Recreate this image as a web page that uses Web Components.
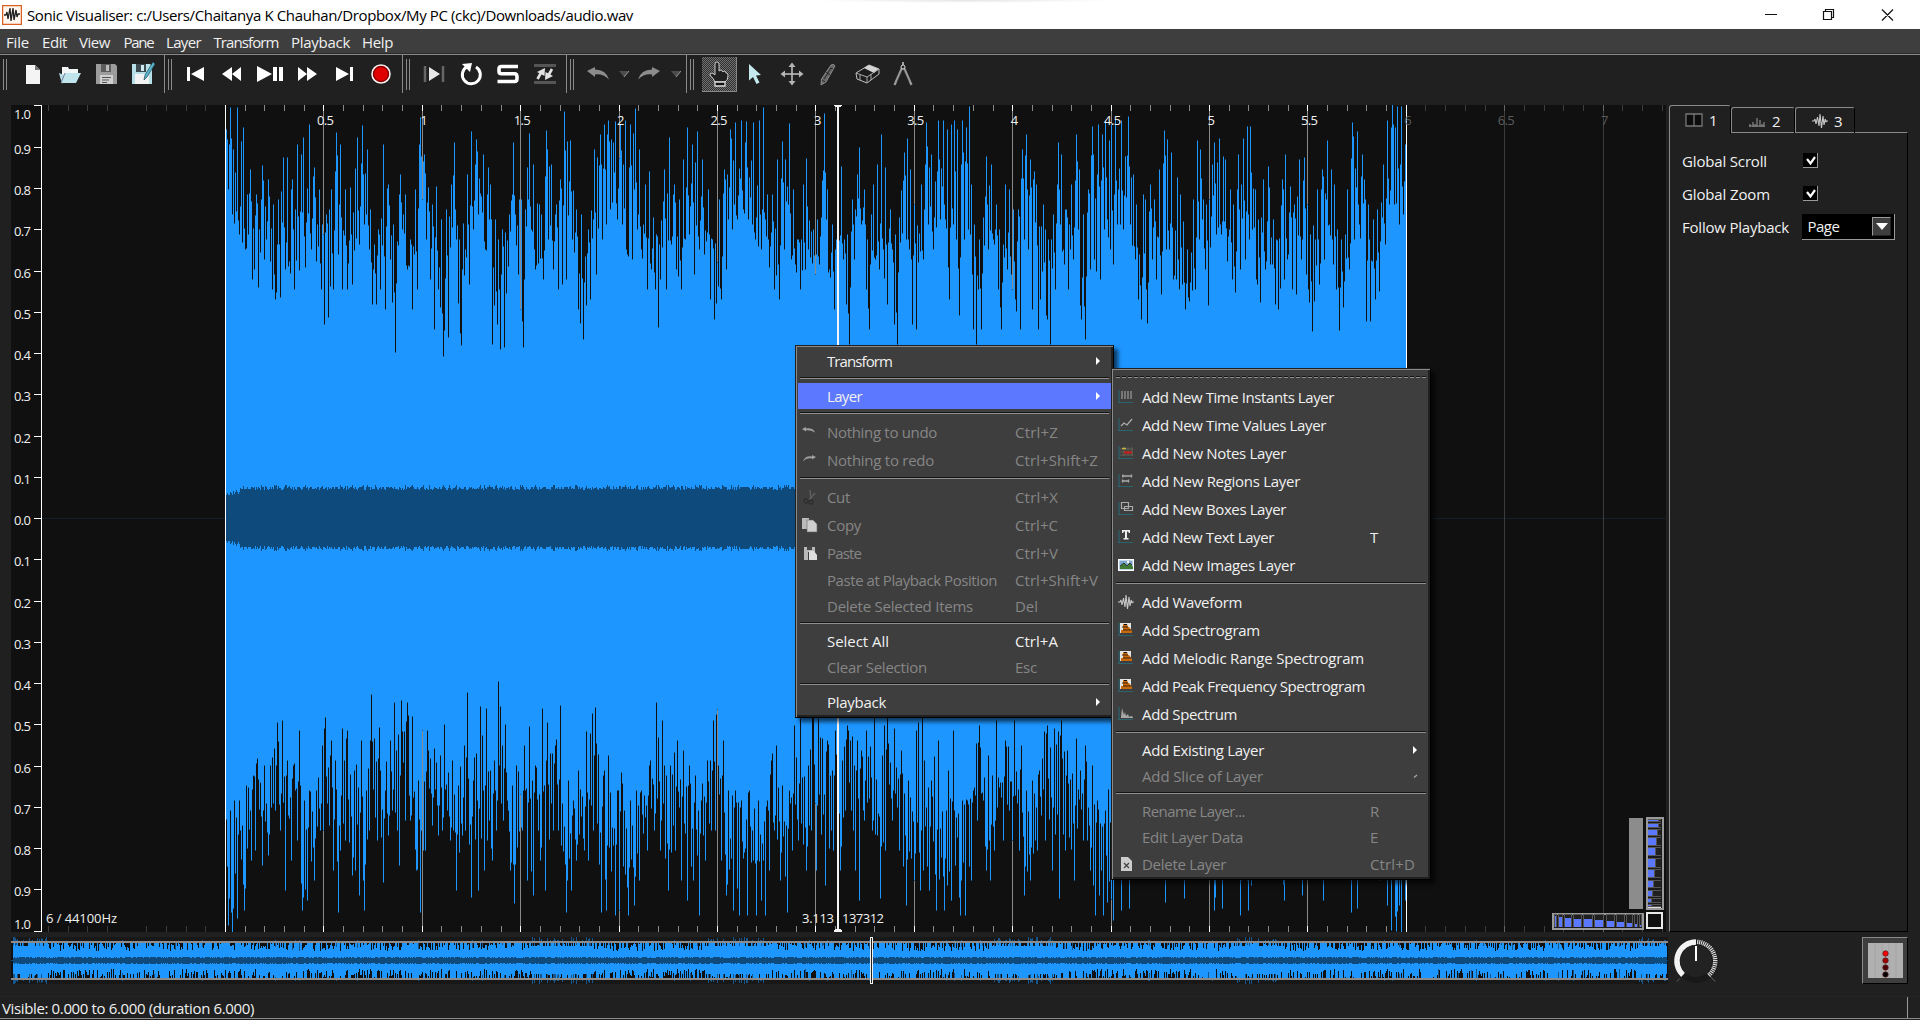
<!DOCTYPE html>
<html lang="en">
<head>
<meta charset="utf-8">
<title>Sonic Visualiser</title>
<style>
html,body{margin:0;width:1920px;height:1020px;overflow:hidden;background:#202020}
body{font:15px "Open Sans","Noto Sans",sans-serif;color:#f0f0f0}
</style>
</head>
<body>
<sv-app></sv-app>
<script>
const measure = document.createElement('canvas').getContext('2d');
const FONT = '"Open Sans","Noto Sans",sans-serif';
function define(name, html, setup) {
  const tpl = document.createElement('template');
  tpl.innerHTML = html;
  customElements.define(name, class extends HTMLElement {
    connectedCallback() {
      if (this.shadowRoot) return;
      this.attachShadow({mode: 'open'}).appendChild(tpl.content.cloneNode(true));
      if (setup) setup.call(this, this.shadowRoot);
    }
  });
}

/* A text run spaced so that it takes exactly w pixels. */
define('fit-text', `<style>:host{display:block;white-space:pre;line-height:20px}span{display:block}</style><span></span>`, function (r) {
  const t = this.getAttribute('t'), w = +this.getAttribute('w'), s = +(this.getAttribute('s') || 15);
  const el = r.querySelector('span');
  el.textContent = t;
  el.style.fontSize = s + 'px';
  if (w) {
    measure.font = s + 'px ' + FONT;
    el.style.letterSpacing = ((w - measure.measureText(t).width) / t.length).toFixed(3) + 'px';
    el.style.width = w + 'px';
  }
});

const axis = '<path d="M1 1v13M0 13.500h15" stroke="#2a6470" stroke-width="1.200"/>';
const spectro = axis + '<path d="M2 1h11v10H2z" fill="#e4e4e0"/><path d="M5 2h4l1 3h1l3 4v2H3V8h2z" fill="#c8690c"/><path d="M4 5h6M5 8h8" stroke="#3a2206" stroke-width="1"/><path d="M6 2h3v1H6z" fill="#111"/>';
const I = {
  app: ['20 20', '<path d="M.5.500h19v19H.5z" fill="#fff6ee" stroke="#d9601f" stroke-width="1.500"/><path d="M2 10h2l1-3 1 7 2-11 1 13 2-13 1 12 2-10 1 7 1-3h2" stroke="#222" stroke-width="1.300" stroke-linejoin="bevel"/>'],
  new: ['24 24', '<path d="M5 3h9l5 5v14H5z" fill="#f4f4f4"/><path d="M14 3l5 5h-5z" fill="#777"/>'],
  open: ['24 24', '<path d="M4 5h6l1 2h9v8H4z" fill="#f2f6f7"/><path d="M1 11l3 11 2-9z" fill="#b7dce4"/><path d="M7 11h16l-5 10H3z" fill="#bfe4ec"/><path d="M7 11l-4 10" stroke="#557" stroke-width=".7"/>'],
  save: ['24 24', '<path d="M2 2h19l2 2v18H2z" fill="#9c9c9c"/><path d="M7 2h10v8H7z" fill="#5c5c5c"/><path d="M12 3h3v6h-3z" fill="#bbb"/><path d="M6 13h13v9H6z" fill="#d0d0d0"/><path d="M8 15.500h9M8 18h7M8 20.500h5" stroke="#555"/>'],
  saveas: ['24 24', '<path d="M1 2h18l2 2v18H1z" fill="#b7dfe8"/><path d="M5 2h10v8H5z" fill="#3c4a50"/><path d="M10 3h3v6h-3z" fill="#cfeaf0"/><path d="M4 12h14v10H4z" fill="#f3f3f3"/><path d="M22 0l2 2-8 13-3 3 1-5z" fill="#5cb3cc" stroke="#1c4a5a" stroke-width=".7"/>'],
  start: ['24 24', '<path d="M3 5h3v14H3zM20 5v14L7 12z" fill="#fff"/>'],
  rew: ['24 24', '<path d="M12 5v14L2 12zM21 5v14L12 12z" fill="#fff"/>'],
  play: ['28 24', '<path d="M1 4v16l15-8zM17 5h4v14h-4zM23 5h4v14h-4z" fill="#fff"/>'],
  ff: ['24 24', '<path d="M3 5v14l9-7zM12 5v14l10-7z" fill="#fff"/>'],
  end: ['24 24', '<path d="M4 5v14l13-7zM18 5h3v14h-3z" fill="#fff"/>'],
  rec: ['24 24', '<circle cx="12" cy="12" r="9" fill="#e00000" stroke="#f2f2f2" stroke-width="1.600"/><circle cx="12" cy="12" r="7.400" fill="none" stroke="#400" stroke-width=".8"/>'],
  playsel: ['24 24', '<path d="M3 4v16M21 4v16" stroke="#666" stroke-width="2.500"/><path d="M7 5v14l11-7z" fill="#e8e8e8"/>'],
  loop: ['24 24', '<path d="M8 4.800A9 9 0 1 0 17 5" fill="none" stroke="#fff" stroke-width="3"/><path d="M3 2l10-1-2 9z" fill="#fff"/>'],
  solo: ['24 24', '<path d="M22 4.500H5.500Q3 4.500 3 7t0 2.200q0 2.600 2.500 2.600h13Q21 11.800 21 15v1.500Q21 19.500 18.500 19.500H1.500" fill="none" stroke="#fff" stroke-width="3.600"/>'],
  align: ['24 24', '<path d="M1 3.500h22M1 20.500h22" stroke="#555" stroke-width="3"/><path d="M4.500 17L9 9M19 7l-4.500 8" stroke="#e2e2e2" stroke-width="2.600" fill="none"/><path d="M4 10l8-4-.5 8zM20 14l-8 4 .5-8z" fill="#e2e2e2"/>'],
  undo: ['24 24', '<path d="M1 9l8-4v2.500q11 0 14 10-6-6-14-5V15z" fill="#8c8c8c"/>'],
  redo: ['24 24', '<path d="M23 9l-8-4v2.500q-11 0-14 10 6-6 14-5V15z" fill="#8c8c8c"/>'],
  drop: ['10 8', '<path d="M0 1h10L5 7z" fill="#4c4c4c"/><path d="M10 1L5 7" stroke="#999"/>'],
  hand: ['24 26', '<path d="M10 1q2 0 2 2v7l2-1q1 0 2 2l1-1q2 0 2 2h1q1 1 1 3 0 4-3 6H8q-1-3-5-7 0-3 4-1l1 1V3q0-2 2-2z" fill="#202020" stroke="#ccc" stroke-width="1"/><path d="M8 21h10v4H8z" fill="#111" stroke="#ddd" stroke-width="1.300"/>'],
  select: ['24 24', '<path d="M7 2l12 11-5 .5 3.500 7-3 1.500-3.500-7L7 18.500z" fill="#c5e8ee"/>'],
  move: ['24 24', '<path d="M12 3v18M3 12h18" stroke="#c4c4c4" stroke-width="1.500"/><path d="M12 .5l3.500 4.500h-7zM12 23.500l3.500-4.500h-7zM.5 12L5 8.500v7zM23.500 12L19 8.500v7z" fill="#b5b5b5"/>'],
  pencil: ['24 24', '<path d="M15 3q3-2 4 1l-9 16-5 3 .5-6z" fill="#666" stroke="#8a8a8a"/><path d="M14 6l3 1M10 10l4 3M8 17l7-11M6 18l3 2" stroke="#222" stroke-width=".9"/>'],
  eraser: ['26 24', '<path d="M2 11L15 3l10 4v5l-12 9-10-4z" fill="#1c1c1c" stroke="#c0c0c0"/><path d="M10 6l5-3 10 4-5 4z" fill="#d4d4d4"/><path d="M2 11l11 4 12-8M13 15v6M6 13v5M17 12v6" stroke="#aaa" fill="none"/>'],
  measure: ['24 24', '<path d="M11 6L3.500 23M13 6l7.500 17" stroke="#9a9a9a" stroke-width="2.300"/><path d="M11.500 8L6 20M12.500 8l5.500 12" stroke="#333" stroke-width=".6"/><circle cx="12" cy="5" r="2" fill="#222" stroke="#ddd"/><path d="M12 0v3" stroke="#ccc" stroke-width="1.500"/>'],
  mundo: ['16 16', '<path d="M0 5l4-2v1.500q7-1 9 4Q9 6 4 6.300V7.500z" fill="#a0a0a0"/>'],
  mredo: ['16 16', '<path d="M14 5l-4-2v1.500q-7-1-9 5 3-4 9-3.200V7.500z" fill="#a0a0a0"/>'],
  cut: ['16 16', '<path d="M8 1l1 9M13 4L7 11" stroke="#5e5e5e" stroke-width="1.500"/><circle cx="4" cy="12" r="2" fill="none" stroke="#2e2e2e" stroke-width="1.300"/><circle cx="9" cy="13" r="2" fill="none" stroke="#2e2e2e" stroke-width="1.300"/>'],
  copy: ['16 16', '<path d="M0 1h7v11H0z" fill="#bbb"/><path d="M5 3h6l4 4v8H5z" fill="#cfcfcf" stroke="#666" stroke-width=".6"/>'],
  paste: ['16 16', '<path d="M2 2h11v5H6v8H2z" fill="#b8b8b8"/><path d="M5 1h5v4H5z" fill="#444"/><path d="M7 6h5l3 4v5H7z" fill="#ddd"/>'],
  instants: ['16 16', axis + '<path d="M4 2v8M7 2v8M10 2v8M13 2v8" stroke="#8f8f8f" stroke-width="1.400"/>'],
  values: ['16 16', axis + '<path d="M3 9l3-3 3 2 5-6" fill="none" stroke="#aaa" stroke-width="1.300"/>'],
  notes: ['16 16', axis + '<path d="M2 4h13M2 7h13M2 10h13M6 2v9M10 2v9M14 2v9" stroke="#6a6a5a" stroke-width=".8"/><path d="M4 3.500h4" stroke="#c9b640" stroke-width="1.500"/><path d="M6 7.500h8" stroke="#c02020" stroke-width="2.400"/>'],
  regions: ['16 16', axis + '<path d="M4 3h10M4 8h7M5 1.500v3M13.500 1.500v3M4.500 6.500v3M10.500 6.500v3" stroke="#aaa" stroke-width="1.300"/>'],
  boxes: ['16 16', axis + '<path d="M3.500 1.500h7v6h-7zM6.500 5.500h8v4h-8z" fill="none" stroke="#aaa" stroke-width="1.200"/>'],
  text: ['16 16', axis + '<path d="M4 1h8v3h-1l-1-1.500H9V9h1.500v1.500h-5V9H7V2.500H6L5 4H4z" fill="#eee"/>'],
  image: ['16 16', '<path d="M.7 2.700h14.600v10.600H.7z" fill="#7ea6cf" stroke="#fff" stroke-width="1.400"/><path d="M2 12V9l4-3 3 3 3-3 3 4v2z" fill="#3f7a35"/><path d="M2 9l4-3 3 3 3-3 2 2" stroke="#222" stroke-width=".8" fill="none"/><circle cx="10" cy="5" r="1.200" fill="#ffd"/>'],
  wave: ['16 16', '<path d="M0 8h2l1-2 1 5 1.500-7L7 13l1-12 1.500 14L11 3l1 9 1.200-6L14 9l.5-1H16" stroke="#c8c8c8" stroke-width="1.100" stroke-linejoin="bevel"/>'],
  spectro: ['16 16', spectro],
  spectrum: ['16 16', axis + '<path d="M3 11L4 2l2 7 1-3 1 4 2-2 1 3 2-1 2 1v1H3z" fill="#a8a8a8"/>'],
  del: ['16 16', '<path d="M3 1h7l4 4v10H3z" fill="#ccc"/><path d="M6 7l5 5M11 7l-5 5" stroke="#444" stroke-width="1.300"/>'],
  tab1: ['18 14', '<path d="M1 1h16v12H1zM9 1v12" fill="#0c0c0c" stroke="#777" stroke-width="1.300"/>'],
  tab2: ['18 14', '<path d="M1 12h16M2 10v3M5 8v5M7 10v3M9 4v9M12 6v7M14 10v3M16 8v5" stroke="#8a8a8a" stroke-width="1.200"/>'],
  check: ['16 16', '<path d="M4 6l3.500 4.500L12 4" fill="none" stroke="#fff" stroke-width="2.200"/>'],
  arrow: ['5 8', '<path d="M0 0l4 4-4 4z" fill="#fff"/>'],
  arrowoff: ['5 8', '<path d="M1 5.500l3-2.500" stroke="#aaa" stroke-width="1.200"/>']
};
define('sv-icon', `<style>:host{display:block;line-height:0;flex:none}</style>`, function (r) {
  const [vb, body] = I[this.getAttribute('n')], [w, h] = vb.split(' ');
  r.innerHTML += `<svg width="${w}" height="${h}" viewBox="0 0 ${vb}" fill="none">${body}</svg>`;
});

define('title-bar', `<style>
:host{display:flex;align-items:center;height:29px;background:#fff;color:#000;padding-left:2px;box-sizing:border-box;
background-image:radial-gradient(ellipse 150px 3px at 965px 0,#e4e4e4,#fff)}
fit-text{margin:0 auto 0 5px}svg{margin-right:26px}
</style><sv-icon n="app"></sv-icon><fit-text t="Sonic Visualiser: c:/Users/Chaitanya K Chauhan/Dropbox/My PC (ckc)/Downloads/audio.wav" w="606"></fit-text>
<svg width="130" height="14" fill="none" stroke="#111" stroke-width="1.200"><path d="M1 6.500h12M59.500 3.500h8v8h-8zM61.500 3.500v-2h8v8h-2M118 1.500l11 11M129 1.500l-11 11"/></svg>`);

define('menu-bar', `<style>:host{display:flex;height:25px;background:#3e3e3e;align-items:center;padding:2px 0 0 6px;box-sizing:border-box;border-bottom:1px solid #2a2a2a}</style>`, function (r) {
  const m = [['File', 23, 13], ['Edit', 25, 12], ['View', 31, 13.500], ['Pane', 30, 12.500], ['Layer', 35, 12.500], ['Transform', 65, 12.500], ['Playback', 59, 12], ['Help', 31, 0]];
  r.innerHTML += m.map(([t, w, g]) => `<fit-text t="${t}" w="${w}" style="margin-right:${g}px"></fit-text>`).join('');
});

define('tool-group', `<style>
:host{display:flex;align-items:center;height:39px;box-sizing:border-box;border-top:1px solid #898989;border-right:1px solid #898989;flex:none}
:host(:last-of-type){flex:1;border-right:0}
i{width:2px;height:31px;border-left:1px solid #8a8a8a;border-right:1px solid #8a8a8a;margin-left:3px;flex:none}
.c{display:flex;justify-content:center;align-items:center;height:38px;width:0;overflow:visible}
.hand{width:34px;height:34px;flex:none;display:flex;align-items:center;justify-content:center;border-right:1px solid #888;border-bottom:1px solid #888;background:repeating-conic-gradient(#707070 0 25%,#303030 0 50%) 0 0/2px 2px}
</style><i></i>`, function (r) {
  let x = 7;
  for (const p of this.getAttribute('items').split(',')) {
    const [n, cx] = p.split(':');
    const d = document.createElement('div');
    d.className = 'c'; d.style.marginLeft = (+cx - x) + 'px'; x = +cx;
    d.innerHTML = n === 'hand' ? '<div class="hand"><sv-icon n="hand"></sv-icon></div>' : `<sv-icon n="${n}"></sv-icon>`;
    r.appendChild(d);
  }
});

define('tool-bars', `<style>:host{display:flex;height:51px;background:#202020;align-items:flex-start}</style>
<tool-group style="width:165px" items="new:33,open:70,save:106,saveas:143"></tool-group>
<tool-group style="width:238px" items="start:31,rew:67,play:105,ff:142,end:179,rec:216"></tool-group>
<tool-group style="width:164px" items="playsel:31,loop:68,solo:105,align:142"></tool-group>
<tool-group style="width:120px" items="undo:31,drop:57,redo:82,drop:109"></tool-group>
<tool-group items="hand:32,select:67,move:105,pencil:141,eraser:180,measure:216"></tool-group>`);

/* Envelope tables: column, tip of the tallest peak, foot of the deepest gap. */
const TOP = '226,130,190 230,108,215 237,108,235 243,128,250 250,170,280 256,195,288 262,166,260 268,180,262 273,205,300 278,200,298 283,158,270 287,158,262 292,180,290 297,145,271 303,138,268 309,125,250 314,168,262 319,190,290 322,225,325 326,215,318 331,190,290 336,133,255 340,145,290 345,190,290 350,188,285 357,138,245 362,126,225 367,150,250 370,210,305 374,245,305 378,230,290 383,145,310 388,185,260 393,225,353 400,175,230 405,195,270 410,240,310 415,190,290 420,118,200 424,155,240 428,188,280 432,205,330 436,187,290 441,220,357 446,210,338 454,143,240 459,240,346 467,175,285 471,132,230 476,140,215 483,155,250 488,168,255 490,185,345 495,220,325 498,240,350 502,230,348 513,143,215 519,200,310 521,200,348 529,134,230 533,165,270 539,205,295 541,215,280 546,131,240 551,165,270 556,205,290 560,180,285 564,112,280 570,141,240 576,210,310 581,215,340 588,230,300 594,150,275 600,135,240 604,125,225 608,121,210 615,122,220 620,125,225 625,121,255 630,125,260 635,109,230 639,150,250 645,185,290 649,172,270 653,218,290 656,235,328 664,170,290 669,138,245 674,185,270 679,200,290 683,160,240 687,128,235 692,145,275 697,132,250 702,160,255 708,190,300 712,240,320 719,200,300 724,170,270 730,130,230 735,123,220 741,121,210 746,122,220 753,123,240 759,121,250 763,108,220 767,195,268 772,195,290 777,160,300 782,142,250 789,124,260 793,190,265 798,240,290 803,185,270 806,159,250 813,230,275 817,220,265 822,181,250 824,114,220 827,190,270 832,225,310 836,240,320 841,167,260 844,240,305 847,235,345 852,200,260 859,148,225 864,190,290 867,240,330 873,185,260 877,165,270 881,135,250 885,168,305 890,210,280 892,250,325 895,235,345 904,153,240 907,139,250 910,170,325 914,205,330 921,185,260 926,123,225 931,155,250 938,121,220 943,121,220 947,130,300 951,125,225 954,121,240 957,130,316 962,121,240 966,128,230 969,107,200 971,185,330 974,225,345 979,240,330 986,157,250 991,165,240 996,205,290 999,230,330 1005,185,270 1009,190,275 1013,210,300 1018,210,330 1022,150,240 1026,135,250 1030,160,310 1034,172,250 1036,185,330 1043,205,290 1045,230,320 1048,240,345 1053,215,290 1058,143,225 1061,155,250 1066,210,290 1071,185,260 1076,135,230 1079,170,320 1083,215,340 1088,190,270 1092,127,260 1098,125,280 1102,135,230 1105,121,220 1111,125,265 1115,120,225 1121,121,230 1128,117,225 1133,175,260 1136,205,300 1139,255,320 1143,195,290 1145,200,324 1150,185,260 1154,200,280 1159,170,295 1164,131,250 1167,140,250 1171,153,280 1177,178,290 1180,195,285 1183,222,310 1187,250,302 1193,200,290 1197,141,240 1200,150,220 1203,200,270 1206,205,306 1212,165,270 1214,143,235 1219,139,235 1223,157,260 1225,160,262 1230,190,280 1233,205,293 1238,155,270 1243,139,260 1247,127,240 1250,127,230 1255,190,285 1258,220,303 1263,180,270 1268,167,265 1273,220,305 1276,240,310 1282,180,280 1285,155,260 1290,187,290 1294,205,295 1299,160,260 1304,158,275 1307,205,303 1310,235,332 1317,190,285 1322,170,260 1327,141,225 1331,170,265 1334,185,290 1337,230,331 1341,240,308 1347,190,270 1352,123,240 1357,132,225 1362,155,260 1364,180,322 1368,205,322 1373,220,300 1377,210,292 1383,165,245 1387,121,205 1392,105,205 1397,107,225 1401,107,215 1405,115,185';
const BOT = '228,925,810 232,932,800 237,918,800 244,910,785 251,860,775 255,850,758 262,865,765 268,855,765 275,810,722 280,830,720 285,890,760 291,860,765 297,840,730 302,910,800 307,900,790 314,880,790 320,830,745 323,830,717 329,825,740 333,870,760 338,912,800 340,850,728 345,840,730 352,875,770 359,895,740 364,910,790 369,830,694 377,840,727 383,882,790 388,835,740 392,810,702 399,865,700 405,820,702 410,820,716 416,870,780 420,912,730 425,850,730 432,825,748 438,835,755 442,830,724 450,840,760 456,890,785 462,835,745 465,830,692 471,897,780 478,890,706 484,870,708 492,860,760 496,830,681 503,820,724 510,870,785 514,903,765 522,830,745 527,880,726 533,895,765 538,830,744 540,860,708 545,890,722 553,830,745 558,830,705 566,912,780 571,890,800 576,860,770 584,850,731 588,860,733 593,830,707 601,912,775 606,910,755 615,915,790 619,910,772 628,915,800 634,905,790 639,880,790 647,850,765 654,830,702 660,850,720 668,890,765 675,850,740 681,880,750 687,900,765 693,880,775 699,915,800 705,860,760 711,830,720 715,830,709 721,860,740 726,895,790 733,910,790 739,915,800 747,915,790 756,915,800 765,915,800 769,870,760 774,830,745 780,880,785 787,912,790 792,850,725 798,840,718 806,870,765 811,830,700 816,870,718 825,885,740 833,850,730 840,870,760 845,810,725 855,870,740 859,900,750 864,820,730 872,830,715 880,898,755 885,850,715 892,820,728 899,850,750 906,905,780 914,880,730 920,890,715 929,890,780 936,910,740 944,910,810 951,900,730 960,915,800 965,915,800 971,880,790 977,820,725 986,870,755 990,880,775 994,850,720 1003,840,740 1012,840,720 1019,850,745 1024,895,790 1030,880,780 1037,850,770 1045,840,725 1052,870,728 1059,898,720 1065,850,750 1074,880,738 1083,840,745 1090,870,765 1095,915,800 1103,915,810 1113,920,760 1121,910,800 1129,908,800 1136,860,760 1145,870,770 1165,902,780 1172,860,760 1184,898,790 1200,860,750 1214,910,800 1222,908,800 1232,850,760 1240,915,800 1248,910,800 1262,860,760 1284,900,780 1292,860,760 1302,895,780 1312,850,750 1323,900,790 1335,860,750 1351,912,790 1357,908,790 1368,860,750 1380,880,780 1387,905,800 1391,930,810 1396,931,810 1401,933,800 1405,925,800';
let seed = 20;
const rnd = () => ((seed = (seed * 1664525 + 1013904223) >>> 0) / 4294967296);
function columns(table) {
  const pts = table.split(' ').map(s => s.split(',').map(Number)), out = [];
  let k = 0;
  for (let x = 226; x < 1406; x++) {
    while (k < pts.length - 2 && pts[k + 1][0] <= x) k++;
    const a = pts[k], b = pts[k + 1], f = Math.max(0, Math.min(1, (x - a[0]) / (b[0] - a[0])));
    const p = a[1] + (b[1] - a[1]) * f, t = a[2] + (b[2] - a[2]) * f;
    let m;
    if (x === a[0]) m = 0;
    else m = (x & 1) ? .1 + rnd() * .45 : .5 + rnd() * .5;
    out.push(Math.round(x === a[0] + 2 ? a[2] : p + (t - p) * m));
  }
  return out;
}

define('wave-pane', `<style>:host{display:block;width:1655px;height:827px;line-height:0;font-family:${FONT}}text{font-size:13px}</style>`, function (r) {
  const up = columns(TOP), dn = columns(BOT);
  const bars = (a, b, x0, e) => a.map((y, i) => `M${x0 + i} ${y - e}h1V${b[i] + e}h-1z`).join('');
  const bt = [], bb = [];
  for (let x = 226; x < 1406; x++) {
    const q = x < 240 ? 5 : 0, j = rnd();
    const h = Math.round(28 - q + (j > .85 ? 4 : j > .4 ? 2 : 0) + rnd() * 1.500);
    bt.push(518 - h); bb.push(518 + h);
  }
  let s = '<svg width="1655" height="827" viewBox="11 105 1655 827" shape-rendering="crispEdges"><path d="M11 105h1655v827H11z" fill="#101010"/><path d="M42 518h1624v1H42z" fill="#10202f"/>';
  for (let k = 1; k <= 14; k++) {
    const x = Math.round(225 + 98.400 * k);
    if (k !== 12) s += `<path d="M${x} 105h1v827h-1z" fill="${k > 12 ? '#3c3c3c' : '#898989'}"/>`;
  }
  for (let k = -9; k <= 73; k++) {
    const x = Math.round(225 + 19.680 * k), major = k % 5 === 0;
    if (k === -5) continue;
    if (k <= 60 && major && k >= 0) s += `<path d="M${x} 105h1v6h-1zM${x} 926h1v6h-1z" fill="#fff"/>`;
    else s += `<path d="M${x} 105h1v6h-1zM${x} 926h1v6h-1z" fill="${k < 0 || k > 60 ? (major ? '#666' : '#3c3c3c') : '#898989'}"/>`;
  }
  s += `<path d="${bars(up, dn, 226, 1)}" fill="#17558b"/><path d="${bars(up, dn, 226, 0)}" fill="#1e96ff"/><path d="${bars(bt, bb, 226, 0)}" fill="#0f4a7c"/>`;
  s += '<path d="M225 105h1v827h-1zM1406 105h1v827h-1z" fill="#fff"/><path d="M837 105h2v827h-2zM834 105h8v1h-1v1h-6v-1h-1zM835 929h6v1h1v2h-8v-2h1z" fill="#f4f4f4"/>';
  s += '<path d="M41 105h1v827h-1z" fill="#fff"/>';
  for (let k = -10; k <= 10; k++) {
    const y = Math.round(518 + 41.250 * k), ty = k === -10 ? 105 : k === 10 ? 931 : y;
    s += `<path d="M34 ${ty}h7v1h-7z" fill="#fff"/><text x="14" y="${k === -10 ? 119 : k === 10 ? 929 : y + 7}" fill="#f0f0f0" textLength="17">${(Math.abs(k) / 10).toFixed(1)}</text>`;
  }
  for (let k = 1; k <= 14; k++) {
    const t = String(k / 2), w = t.length > 1 ? 17 : 7, x = 225 + 98.400 * k;
    s += `<text x="${(x + 2 - w / 2).toFixed(1)}" y="125" fill="${k > 11 ? '#5c5c5c' : '#f0f0f0'}" textLength="${w}">${t}</text>`;
  }
  s += '<g fill="#f0f0f0"><text x="46" y="923" textLength="71">6 / 44100Hz</text><text x="802" y="923" textLength="32">3.113</text><text x="842" y="923" textLength="42">137312</text></g>';
  /* zoom wheels */
  s += '<path d="M1629 818h14v91h-14z" fill="#8c8c8c"/><path d="M1646.500 817.500h16v91h-16z" fill="#1a1a1a" stroke="#999" stroke-width="2"/><path d="M1648 819h13M1648 907h13" stroke="#ddd"/>';
  [[820, 1, 10], [824, 3, 10], [830, 5, 9], [838, 7, 8], [848, 7, 7], [859, 8, 7], [870, 7, 6], [881, 6, 5], [891, 5, 4], [899, 3, 3], [905, 1, 3]].forEach(([y, h, w]) => {
    s += `<path d="M1648 ${y - 1}h13v${h + 2}h-13z" fill="#555"/><path d="M${1649 + w} ${y}h${12 - w}v${h}h-${12 - w}z" fill="#202020"/><path d="M1648 ${y}h${w}v${h}h-${w}z" fill="#5c78ff"/>`;
  });
  s += '<path d="M1552.500 913.500h90v15h-90z" fill="#1a1a1a" stroke="#999" stroke-width="2"/><path d="M1554 914v13M1641 914v13" stroke="#ddd"/>';
  [[1555, 1, 11], [1559, 3, 10], [1565, 6, 9], [1574, 7, 8], [1584, 8, 8], [1595, 8, 7], [1607, 7, 6], [1617, 7, 5], [1627, 5, 4], [1635, 2, 3], [1640, 1, 2]].forEach(([x, w, h]) => {
    s += `<path d="M${x - 1} 914h${w + 2}v13h-${w + 2}z" fill="#555"/><path d="M${x} 915h${w}v${12 - h}h-${w}z" fill="#202020"/><path d="M${x} ${927 - h}h${w}v${h}h-${w}z" fill="#5c78ff"/>`;
  });
  s += '<path d="M1647 913h15v15h-15z" fill="#101010" stroke="#e8e8e8" stroke-width="2"/></svg>';
  r.innerHTML += s;
});

define('over-view', `<style>:host{display:block;width:1657px;height:47px;line-height:0}</style>`, function (r) {
  let d = '', e = '', g = '';
  for (let x = 13; x < 1667; x++) {
    const main = 226 + (x - 13) * 1180 / 1654;
    const loud = main < 250 || main > 1385 || (main > 595 && main < 640) || (main > 720 && main < 765) || (main > 925 && main < 970) || (main > 1095 && main < 1130);
    let a = rnd(), h = a > .52 ? 17 : 9 + a * 14;
    if (loud) h = Math.max(h, 14);
    const b = rnd();
    let h2 = b > .45 ? 17 : 8 + b * 18;
    if (loud) h2 = Math.max(h2, 13);
    d += `M${x} ${Math.round(960 - h)}h1V${Math.round(961 + h2)}h-1z`;
    if (rnd() < (loud ? .33 : .06)) { const k = loud ? 19 + Math.round(rnd() * 4) : 19 + Math.round(rnd()); e += `M${x} ${960 - k}h1v${2 * k + 1}h-1z`; }
    if (rnd() > .4) g += `M${x} 957h1v7h-1z`;
  }
  r.innerHTML += `<svg width="1657" height="47" viewBox="11 937 1657 47" shape-rendering="crispEdges"><path d="M11 937h1657v47H11z" fill="#181818"/><path d="M11 943h1657v36H11z" fill="#101010"/><path d="${e}" fill="#17558b"/><path d="${d}" fill="#1e96ff"/><path d="M11 960h1657v1H11z" fill="#0f4a7c"/><path d="M13 958h1654v5H13z" fill="#0f4a7c"/><path d="${g}" fill="#0f4a7c"/><path d="M11 941h1657v2H11zM11 978h1657v2H11z" fill="#8b8b8b"/><path d="M870.500 937.500h2v46h-2z" fill="#222" stroke="#f0f0f0"/></svg>`;
});

define('tab-head', `<style>
:host{display:flex;align-items:center;gap:6px;box-sizing:border-box;height:26px;border:1px solid #898989;border-right-color:#000;border-bottom:0;border-radius:3px 3px 0 0;padding-left:16px}
:host([on]){height:29px;background:#202020;padding-left:15px;margin-bottom:-1px;z-index:1}
</style><slot></slot>`);
define('side-panel', `<style>
:host{display:flex;flex-direction:column;width:239px;height:827px}
.tabs{display:flex;align-items:flex-end;height:28px;position:relative}
.body{flex:1;border:1px solid #898989;border-right-color:#000;border-bottom-color:#000;padding:16px 12px 0 12px;display:flex;flex-direction:column;margin-top:-1px}
.row{display:flex;align-items:center;height:33px}
.row fit-text{width:121px}
.chk{width:14px;height:14px;background:#000;border-right:1px solid #999;border-bottom:1px solid #999;display:flex}
.combo{display:flex;align-items:center;justify-content:space-between;box-sizing:border-box;width:93px;height:26px;background:#000;border-right:1px solid #999;border-bottom:1px solid #999;padding:0 3px 0 5px}
.row .combo fit-text{width:auto}
.dd{width:17px;height:17px;background:#3e3e3e;border:1px solid #999;border-right-color:#222;border-bottom-color:#222;display:flex;align-items:center;justify-content:center}
</style>
<div class="tabs"><tab-head on style="width:62px"><sv-icon n="tab1"></sv-icon><fit-text t="1" w="8"></fit-text></tab-head><tab-head style="width:64px"><sv-icon n="tab2"></sv-icon><fit-text t="2" w="8"></fit-text></tab-head><tab-head style="width:60px"><sv-icon n="wave"></sv-icon><fit-text t="3" w="8"></fit-text></tab-head></div>
<div class="body"><div class="row" style="height:23px"><fit-text t="Global Scroll" w="85"></fit-text><div class="chk"><sv-icon n="check"></sv-icon></div></div>
<div class="row" style="height:43px"><fit-text t="Global Zoom" w="88"></fit-text><div class="chk"><sv-icon n="check"></sv-icon></div></div>
<div class="row" style="height:23px"><fit-text t="Follow Playback" w="107"></fit-text><div class="combo"><fit-text t="Page" w="32"></fit-text><div class="dd"><svg width="12" height="7"><path d="M0 0h12L6 7z" fill="#fff"/></svg></div></div></div></div>`);

define('volume-knob', `<style>:host{display:block;width:46px;height:46px}</style>`, function (r) {
  const P = (a, q) => `${(23 + q * Math.sin(a * Math.PI / 180)).toFixed(1)} ${(23 - q * Math.cos(a * Math.PI / 180)).toFixed(1)}`;
  let t = '';
  for (let a = 5; a <= 137; a += 6) t += `M${P(a, 17)}L${P(a, 21.500)}`;
  r.innerHTML += `<svg width="46" height="46" fill="none"><circle cx="23" cy="23" r="22" fill="#191919"/><path d="M${P(-137, 24)}L${P(-137, 28)}M${P(137, 22)}L${P(137, 28)}" stroke="#666"/><path d="M${P(-137, 19)}A19 19 0 0 1 23 4" stroke="#f2f2f2" stroke-width="5.500"/><path d="${t}" stroke="#ddd" stroke-width="1.200"/><circle cx="23" cy="23" r="16" fill="#222"/><path d="M23 8v15" stroke="#fff" stroke-width="2"/></svg>`;
});
define('level-button', `<style>:host{display:flex;align-items:center;justify-content:center;box-sizing:border-box;width:46px;height:47px;background:#3e3e3e;border:1px solid #898989;border-right-color:#000;border-bottom-color:#000}</style>
<svg width="35" height="35"><path d="M0 0h35v35H0z" fill="#b0b0b0"/><path d="M7 0v35M14 0v35M21 0v35M28 0v35" stroke="#a4a4a4"/><g stroke="#522" stroke-width=".8"><circle cx="17.500" cy="10.500" r="2.700" fill="#f00"/><circle cx="17.500" cy="17.500" r="2.700" fill="#a00000"/><circle cx="17.500" cy="24.500" r="2.700" fill="#4c0000"/><circle cx="17.500" cy="31.500" r="2.700" fill="#000"/></g></svg>`);

define('status-bar', `<style>:host{display:flex;height:23px;box-sizing:border-box;border-top:1px solid #242424;border-bottom:1px solid #898989;padding-left:2px;margin-bottom:1px;align-items:center}
i{margin-left:auto;width:12px;height:21px;border-left:1px solid #999}</style><fit-text t="Visible: 0.000 to 6.000 (duration 6.000)" w="252"></fit-text><i></i>`);

define('menu-item', `<style>
:host{display:flex;align-items:center;height:26px;padding:0 10px 0 4px;color:#f0f0f0}
:host([icon]){height:28px}:host([off]){color:#868686}:host([on]){background:#5c78ff}
.sc{margin-left:auto}.arr{margin-left:auto}
</style>`, function (r) {
  const g = n => this.getAttribute(n), ic = g('icon'), sc = g('sc');
  r.innerHTML += `<div style="width:${g('gut')}px">${ic ? `<sv-icon n="${ic}"></sv-icon>` : ''}</div><fit-text t="${g('t')}" w="${g('w')}"></fit-text>` +
    (sc ? `<div class="sc" style="width:${g('scw')}px"><fit-text t="${sc}" w="${g('sw')}"></fit-text></div>` : '') +
    (g('arr') !== null ? `<sv-icon class="arr" n="${this.hasAttribute('off') ? 'arrowoff' : 'arrow'}"></sv-icon>` : '');
});
define('menu-sep', `<style>:host{display:block;height:9px;padding:3px 2px 0;box-sizing:border-box}i{display:block;height:1px;background:#151515;border-bottom:1px solid #909090}</style><i></i>`);
define('pop-menu', `<style>
:host{position:absolute;display:block;box-sizing:border-box;background:#3e3e3e;border:1px solid #202020;border-right:1px solid #000;border-bottom:1px solid #000;box-shadow:inset 1px 1px #8a8a8a,inset -2px -2px #202020,4px 4px 4px rgba(0,0,0,.6);padding:2px}
i{display:block;height:12px;box-sizing:border-box;padding:5px 2px 0}i::before{content:"";display:block;height:2px;background:linear-gradient(#151515 50%,#909090 50%);-webkit-mask:repeating-linear-gradient(90deg,#000 0 4px,transparent 4px 6px);mask:repeating-linear-gradient(90deg,#000 0 4px,transparent 4px 6px)}
</style>`, function (r) {
  const main = this.getAttribute('kind') === 'main';
  const gut = main ? 25 : 24, scw = main ? 86 : 48;
  const rows = main ? [
    ['Transform', 65, {arr: 1}], 0, ['Layer', 35, {arr: 1, on: 1}], 0,
    ['Nothing to undo', 110, {icon: 'mundo', off: 1, sc: 'Ctrl+Z', sw: 43}], ['Nothing to redo', 107, {icon: 'mredo', off: 1, sc: 'Ctrl+Shift+Z', sw: 83}], 0,
    ['Cut', 23, {icon: 'cut', off: 1, sc: 'Ctrl+X', sw: 43}], ['Copy', 34, {icon: 'copy', off: 1, sc: 'Ctrl+C', sw: 43}], ['Paste', 34, {icon: 'paste', off: 1, sc: 'Ctrl+V', sw: 43}],
    ['Paste at Playback Position', 170, {off: 1, sc: 'Ctrl+Shift+V', sw: 83}], ['Delete Selected Items', 146, {off: 1, sc: 'Del', sw: 23}], 0,
    ['Select All', 62, {sc: 'Ctrl+A', sw: 43}], ['Clear Selection', 100, {off: 1, sc: 'Esc', sw: 22}], 0, ['Playback', 59, {arr: 1}]
  ] : [
    ['Add New Time Instants Layer', 192, {icon: 'instants'}], ['Add New Time Values Layer', 184, {icon: 'values'}], ['Add New Notes Layer', 144, {icon: 'notes'}],
    ['Add New Regions Layer', 158, {icon: 'regions'}], ['Add New Boxes Layer', 144, {icon: 'boxes'}], ['Add New Text Layer', 132, {icon: 'text', sc: 'T', sw: 9}], ['Add New Images Layer', 153, {icon: 'image'}], 0,
    ['Add Waveform', 100, {icon: 'wave'}], ['Add Spectrogram', 118, {icon: 'spectro'}], ['Add Melodic Range Spectrogram', 222, {icon: 'spectro'}], ['Add Peak Frequency Spectrogram', 223, {icon: 'spectro'}], ['Add Spectrum', 95, {icon: 'spectrum'}], 0,
    ['Add Existing Layer', 122, {arr: 1}], ['Add Slice of Layer', 121, {arr: 1, off: 1}], 0,
    ['Rename Layer...', 103, {off: 1, sc: 'R', sw: 9}], ['Edit Layer Data', 101, {off: 1, sc: 'E', sw: 8}], ['Delete Layer', 84, {icon: 'del', off: 1, sc: 'Ctrl+D', sw: 45}]
  ];
  r.innerHTML += (main ? '' : '<i></i>') + rows.map(q => q ? `<menu-item t="${q[0]}" w="${q[1]}" gut="${gut}" scw="${scw}" ${Object.entries(q[2]).map(([k, v]) => `${k}="${v}"`).join(' ')}></menu-item>` : '<menu-sep></menu-sep>').join('');
});

define('sv-app', `<style>
:host{display:flex;flex-direction:column;width:1920px;height:1020px;background:#202020;position:relative;overflow:hidden}
.main{display:flex;gap:3px;padding-left:11px;height:827px}
.foot{display:flex;padding:5px 12px 0 11px;height:59px;flex:1;align-items:flex-start;box-sizing:border-box}
volume-knob{margin:1px 0 0 5px}level-button{margin-left:auto}
</style>
<title-bar></title-bar><menu-bar></menu-bar><tool-bars></tool-bars>
<div class="main"><wave-pane></wave-pane><side-panel></side-panel></div>
<div class="foot"><over-view></over-view><volume-knob></volume-knob><level-button></level-button></div>
<status-bar></status-bar>
<pop-menu kind="main" style="left:795px;top:345px;width:319px;height:373px"></pop-menu>
<pop-menu kind="layer" style="left:1111px;top:368px;width:320px;height:512px"></pop-menu>`);
</script>
</body>
</html>
